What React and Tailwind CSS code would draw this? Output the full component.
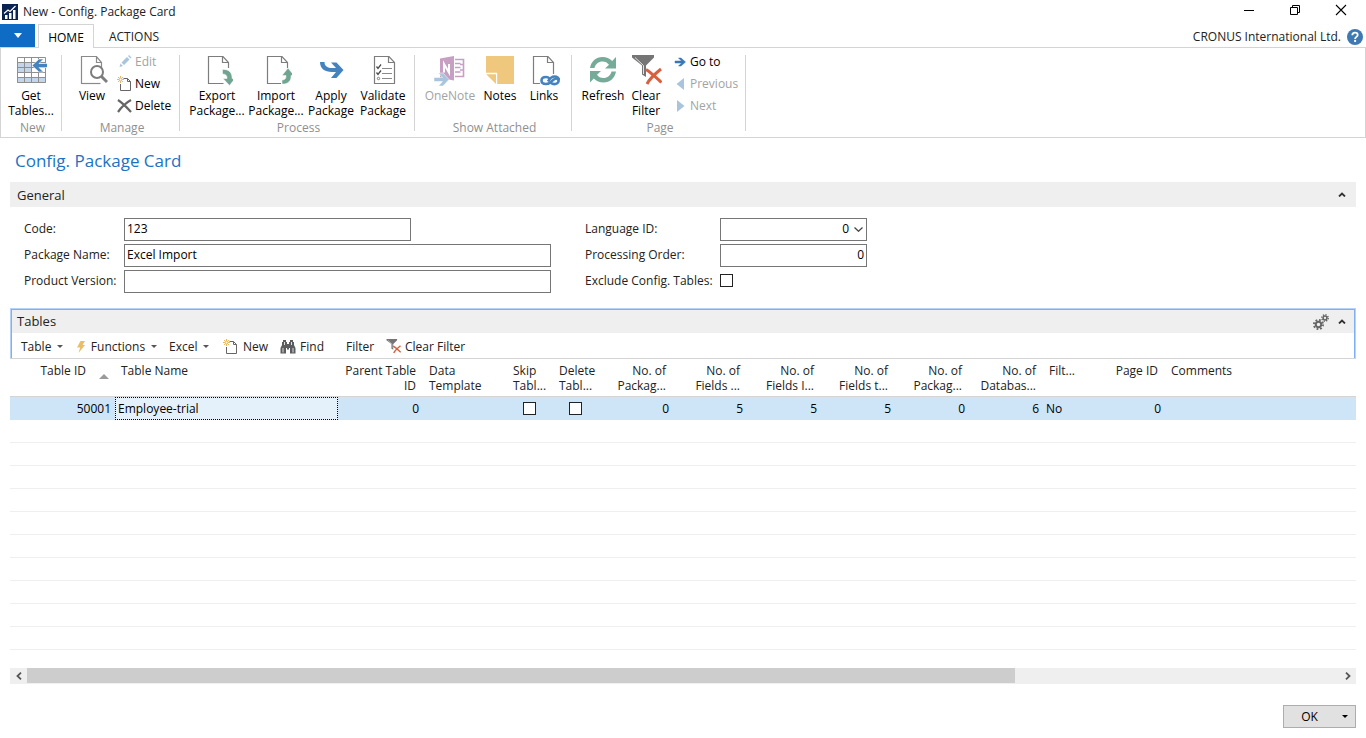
import React from "react";

const Icon = ({ children }) => (
  <svg className="h-8 w-8 shrink-0" viewBox="0 0 32 32" aria-hidden="true">
    {children}
  </svg>
);

const GetTablesIcon = () => (
  <Icon>
    <path d="M2 3h29v26H2z" fill="#fff" />
    <path d="M2 8h29v10H2zM2 23h29v6H2z" fill="#c3d5ea" />
    <path d="M16 8h15v10H16z" fill="#fff" />
    <path d="M2.500 3.500h28v25h-28zM9.500 3v26M16.500 3v26M23.500 3v26M2 8.500h29M2 13.500h29M2 18.500h29M2 23.500h29" fill="none" stroke="#8f8f8f" />
    <path d="M17 11.500 24 5h4.500l-4.500 4.500H33v4h-9l4.500 4.500H24z" fill="#4583bf" stroke="#fff" strokeWidth="0.600" />
  </Icon>
);

const ViewIcon = () => (
  <Icon>
    <path d="M13 29.500H5.500v-27h15l5 6v6M20.500 2.500v6h5" fill="none" stroke="#8a8a8a" strokeWidth="1.200" />
    <path d="M5.500 29.500h19" stroke="#8a8a8a" strokeWidth="1.200" />
    <circle cx="21" cy="18" r="6" fill="#fff" stroke="#7d7d7d" strokeWidth="2" />
    <path d="m25.500 22.500 5.500 5.500" stroke="#7d7d7d" strokeWidth="3" />
  </Icon>
);

const ExportIcon = () => (
  <Icon>
    <path d="M22.500 29.500H7.500v-27H22l5.500 6V14M21.500 2.500v6h6" fill="none" stroke="#7d7d7d" strokeWidth="1.200" />
    <path d="M21.500 15.500c6-.5 10 3 9.500 9h3L28.500 31.500 22 24.500h4c.3-3-1.500-4.500-4.500-4.500z" fill="#70a591" stroke="#fff" strokeWidth="0.500" />
  </Icon>
);

const ImportIcon = () => (
  <Icon>
    <path d="M21 29.500H7.500v-27H22l5.500 6V14M21.500 2.500v6h6" fill="none" stroke="#7d7d7d" strokeWidth="1.200" />
    <path d="M22 30c5.500.5 9.500-3 9-8.500h3L28 14l-6 7.500h4c.3 3-1 4.500-4 4.500z" fill="#70a591" stroke="#fff" strokeWidth="0.500" />
  </Icon>
);

const ApplyIcon = () => (
  <Icon>
    <path d="M5 8h4.500c0 4 3 6 8 6h3.500l-5-5.500h5.500l7 7.500-7 8H16l5-6h-4C9.500 18 5 14.500 5 8z" fill="#4583bf" />
  </Icon>
);

const ValidateIcon = () => (
  <Icon>
    <path d="M7.500 2.500H22l5.500 6v21h-20zM21.500 2.500v6h6" fill="none" stroke="#7d7d7d" strokeWidth="1.200" />
    <path d="m9.500 12.500 1.500 2 3-4M9.500 18.500l1.500 2 3-4" fill="none" stroke="#4d4d4d" strokeWidth="1.300" />
    <path d="M15 14.500h10M15 19.500h10M15 24.500h10" stroke="#8a8a8a" />
    <circle cx="11.500" cy="24.500" r="1.200" fill="none" stroke="#7d7d7d" />
  </Icon>
);

const OneNoteIcon = () => (
  <Icon>
    <path d="M21 5.500h8.500v17H21M21 9.500h5.500M21 13.500h5.500M21 18h5.500M26 10.500h4M26 16h4" fill="none" stroke="#c69fc3" strokeWidth="1.600" />
    <path d="M6 4.500 20 2v24.500L6 24z" fill="#c69fc3" />
    <path d="M10 18.500v-8.500l5 8.500v-8.500" fill="none" stroke="#fff" strokeWidth="2" />
    <path d="M0 23.500h8.500l-4-4.500H9l6 6.500-6 6.500H4.500l4-4.500H0z" fill="#a9c4dd" stroke="#fff" strokeWidth="0.500" />
  </Icon>
);

const NotesIcon = () => (
  <Icon>
    <path d="M2 2h28v28H13.200V18.800H2z" fill="#efc77d" />
    <path d="M2.200 20.200h9.800V30z" fill="#efc77d" />
  </Icon>
);

const LinksIcon = () => (
  <Icon>
    <path d="M12 29.500H5.500v-27H20l5.500 6V20M19.500 2.500v6h6" fill="none" stroke="#7d7d7d" strokeWidth="1.200" />
    <g fill="none" stroke="#4583bf" strokeWidth="2.600">
      <path d="M21.500 24.500c-1-1.200-2-1.500-3.500-1.500-3 0-4.500 1.500-4.500 3.500s1.500 3.500 4.500 3.500c3.500 0 4.500-2 6.500-3.500s3-3 5-1.500 1 4.500-2 5c-2 .3-3.500-.2-4.500-1" />
      <path d="M20 27.500c2-3.500 4-5 6.500-5s4.500 1.500 4.500 3.800" />
    </g>
  </Icon>
);

const RefreshIcon = () => (
  <Icon>
    <g fill="#76ab99">
      <path d="M3 14C4 7.500 9 3 15.500 3c4 0 7 1.300 9.700 4L29 3v11.500H18l4-3.700C20.300 8.700 18.500 7.500 15.500 7.500 11.500 7.500 8.500 10 7.500 14z" />
      <path d="M29 17.500c-1 6.500-6 11-12.500 11-4 0-7-1.300-9.700-4L3 28.500V17h11l-4 3.700c1.700 2.100 3.500 3.300 6.500 3.300 4 0 7-2.500 8-6.500z" />
    </g>
  </Icon>
);

const ClearFilterShape = () => (
  <g>
    <path d="M2 1h22v2.500l-8 8V23l-4-2.500v-9L2 3.500z" fill="#757575" />
    <path d="M5 3.500l8.500 8V20" fill="none" stroke="#fff" strokeWidth="0.800" />
    <path d="M16 15.500c5 3 10 8 15.500 13M31 15c-5 4-11 9-14 15" fill="none" stroke="#d8603f" strokeWidth="3" />
  </g>
);

const Small = ({ children }) => (
  <svg className="h-4 w-4 shrink-0" viewBox="0 0 16 16" aria-hidden="true">
    {children}
  </svg>
);

const NewDocIcon = () => (
  <Small>
    <path d="M6.500 2.500h4l3 3v9h-10V8M10.500 2.500v3h3" fill="none" stroke="#666" />
    <path d="M3.500 0v7M0 3.500h7M1 1l5 5M6 1 1 6" stroke="#e9b04c" strokeWidth="0.900" />
    <circle cx="3.500" cy="3.500" r="1" fill="#fff" />
  </Small>
);

const EditIcon = () => (
  <Small>
    <path d="m2.500 13 1-3.500 2.500 2.500zM4.500 8.500l5.500-5.500 2.500 2.500L7 11zM11 2l1-1 2.500 2.500-1 1z" fill="#a9c4dd" />
  </Small>
);

const DeleteIcon = () => (
  <Small>
    <path d="M1 2C5.500 5 9.500 9 14 14M14 2C8.500 5 4.500 9 1 14" fill="none" stroke="#666" strokeWidth="2.200" />
  </Small>
);

const GoToIcon = () => (
  <Small>
    <path d="M3 7h6.500L6.500 4H9l4.500 4L9 12H6.500l3-3H3z" fill="#3a77b5" stroke="#3a77b5" strokeWidth="0.500" />
  </Small>
);

const PreviousIcon = () => (
  <Small>
    <path d="M12 2v12L4.500 8z" fill="#a9c4dd" />
  </Small>
);

const NextIcon = () => (
  <Small>
    <path d="M5 2v12l7.500-6z" fill="#a9c4dd" />
  </Small>
);

const Caret = () => (
  <svg className="h-[3px] w-[6px] shrink-0" viewBox="0 0 6 3" aria-hidden="true">
    <path d="M0 0h6L3 3z" fill="#555" />
  </svg>
);

const ChevronUp = () => (
  <svg className="h-[5px] w-2 shrink-0" viewBox="0 0 8 5" aria-hidden="true">
    <path d="M1 4.500 4 1.500l3 3" fill="none" stroke="#333" strokeWidth="1.800" />
  </svg>
);

function BigButton({ icon, lines, width, disabled }) {
  return (
    <button
      type="button"
      disabled={disabled}
      className={`flex shrink-0 flex-col items-center gap-[2px] ${width} ${disabled ? "text-[#a3a3a3]" : "text-black"}`}
    >
      {icon}
      <span className="leading-[15px] whitespace-nowrap">
        {lines.map((line) => (
          <span key={line} className="block">{line}</span>
        ))}
      </span>
    </button>
  );
}

function SmallButton({ icon, label, disabled }) {
  return (
    <button
      type="button"
      disabled={disabled}
      className={`flex h-[22px] items-center gap-0.5 whitespace-nowrap ${disabled ? "text-[#a3a3a3]" : "text-black"}`}
    >
      {icon}
      <span>{label}</span>
    </button>
  );
}

function Group({ title, width, pad = "", children }) {
  return (
    <section className={`flex shrink-0 ${width}`} aria-label={title}>
      <div className="flex min-w-0 flex-1 flex-col justify-between pt-[6px] pb-[2px]">
        <div className={`flex items-start ${pad}`}>{children}</div>
        <div className="pl-[3px] text-center leading-[15px] text-[#8f8f8f]">{title}</div>
      </div>
      <div className="mt-[7px] h-[76px] w-px bg-[#d4d4d4]" />
    </section>
  );
}

function TextField({ id, label, value, labelWidth, inputWidth, align = "" }) {
  return (
    <div className="flex items-center">
      <label htmlFor={id} className={`shrink-0 pb-0.5 whitespace-nowrap ${labelWidth}`}>{label}</label>
      <input
        id={id}
        type="text"
        defaultValue={value}
        className={`h-[23px] w-full min-w-0 border border-[#767676] bg-white px-0.5 pb-0.5 text-black outline-none ${inputWidth} ${align}`}
      />
    </div>
  );
}

const checkbox = "block size-[13px] appearance-none border border-[#222] bg-white";

const columns = [
  { lines: ["Table ID"], width: "w-[105px]", right: true, sorted: true, value: "50001" },
  { lines: ["Table Name"], width: "w-[223px]", focused: true, value: "Employee-trial" },
  { lines: ["Parent Table", "ID"], width: "w-[85px]", right: true, value: "0" },
  { lines: ["Data", "Template"], width: "w-[84px]", value: "" },
  { lines: ["Skip", "Tabl..."], width: "w-[46px]", check: true },
  { lines: ["Delete", "Tabl..."], width: "w-[46px]", check: true },
  { lines: ["No. of", "Packag..."], width: "w-[74px]", right: true, value: "0" },
  { lines: ["No. of", "Fields ..."], width: "w-[74px]", right: true, value: "5" },
  { lines: ["No. of", "Fields I..."], width: "w-[74px]", right: true, value: "5" },
  { lines: ["No. of", "Fields t..."], width: "w-[74px]", right: true, value: "5" },
  { lines: ["No. of", "Packag..."], width: "w-[74px]", right: true, value: "0" },
  { lines: ["No. of", "Databas..."], width: "w-[74px]", right: true, value: "6" },
  { lines: ["Filt..."], width: "w-[48px]", value: "No" },
  { lines: ["Page ID"], width: "w-[74px]", right: true, value: "0" },
  { lines: ["Comments"], width: "", value: "" },
];

const emptyRows = Array.from({ length: 10 }, (_, i) => i);

function TitleBar() {
  return (
    <header className="flex h-6 items-center">
      <svg className="ml-[2px] h-4 w-4" viewBox="0 0 16 16" aria-hidden="true">
        <path d="M0 0h16v16H0z" fill="#0b2350" />
        <path d="M3 11h2.500v4H3zM7 9h2.500v6H7zM11 6h2.500v9H11z" fill="#fff" />
        <path d="M2 9.500 6 6l2 1.500L13.500 2" fill="none" stroke="#fff" strokeWidth="1.200" />
      </svg>
      <h1 className="ml-[5px]">New - Config. Package Card</h1>
      <div className="mr-0.5 ml-auto flex pb-1">
        <button type="button" aria-label="Minimize" className="flex w-[46px] justify-center">
          <svg className="h-3 w-3" viewBox="0 0 12 12"><path d="M1 6.500h10" stroke="#000" /></svg>
        </button>
        <button type="button" aria-label="Restore" className="flex w-[46px] justify-center">
          <svg className="h-3 w-3" viewBox="0 0 12 12">
            <path d="M1.500 3.500h7v7h-7zM3.500 3.500v-2h7v7h-2" fill="none" stroke="#000" />
          </svg>
        </button>
        <button type="button" aria-label="Close" className="flex w-[46px] justify-center">
          <svg className="h-3 w-3" viewBox="0 0 12 12"><path d="m1 1 10 10M11 1 1 11" stroke="#000" strokeWidth="1.100" /></svg>
        </button>
      </div>
    </header>
  );
}

function Tabs() {
  return (
    <nav className="flex h-6">
      <div className="w-[35px] border-b border-[#d4d4d4]">
        <button type="button" aria-label="Application menu" className="flex h-full w-full items-center justify-center bg-[#0f6cc5]">
          <svg className="h-[5px] w-2" viewBox="0 0 8 5"><path d="M0 0h8L4 5z" fill="#fff" /></svg>
        </button>
      </div>
      <div className="w-[3px] border-b border-[#d4d4d4]" />
      <button type="button" className="w-14 border border-b-0 border-[#d4d4d4] pt-0.5 text-black">HOME</button>
      <div className="flex flex-1 items-center border-b border-[#d4d4d4] pt-[3px]">
        <button type="button" className="w-20">ACTIONS</button>
        <span className="ml-auto">CRONUS International Ltd.</span>
        <button type="button" aria-label="Help" className="mr-[3px] ml-[6px]">
          <svg className="h-4 w-4" viewBox="0 0 16 16">
            <circle cx="8" cy="8" r="8" fill="#3f79b3" />
            <path d="M5.300 6.200C5.300 4.500 6.400 3.600 8 3.600s2.700.9 2.700 2.300c0 1.900-2.600 2-2.600 4" fill="none" stroke="#fff" strokeWidth="1.800" />
            <circle cx="8.100" cy="12" r="1.150" fill="#fff" />
          </svg>
        </button>
      </div>
    </nav>
  );
}

function Ribbon() {
  return (
    <div className="flex h-[90px] border-x border-b border-[#d4d4d4]">
      <Group title="New" width="w-[61px]">
        <BigButton icon={<GetTablesIcon />} lines={["Get", "Tables..."]} width="w-[60px]" />
      </Group>
      <Group title="Manage" width="w-[118px]" pad="pl-2.5">
        <BigButton icon={<ViewIcon />} lines={["View"]} width="w-10" />
        <div className="-mt-[3px] ml-[5px]">
          <SmallButton icon={<EditIcon />} label="Edit" disabled />
          <SmallButton icon={<NewDocIcon />} label="New" />
          <SmallButton icon={<DeleteIcon />} label="Delete" />
        </div>
      </Group>
      <Group title="Process" width="w-[235px]" pad="pl-[7px]">
        <BigButton icon={<ExportIcon />} lines={["Export", "Package..."]} width="w-[60px]" />
        <BigButton icon={<ImportIcon />} lines={["Import", "Package..."]} width="w-[58px]" />
        <BigButton icon={<ApplyIcon />} lines={["Apply", "Package"]} width="w-[52px]" />
        <BigButton icon={<ValidateIcon />} lines={["Validate", "Package"]} width="w-[52px]" />
      </Group>
      <Group title="Show Attached" width="w-[157px]" pad="pl-[7px]">
        <BigButton icon={<OneNoteIcon />} lines={["OneNote"]} width="w-[56px]" disabled />
        <BigButton icon={<NotesIcon />} lines={["Notes"]} width="w-11" />
        <BigButton icon={<LinksIcon />} lines={["Links"]} width="w-11" />
      </Group>
      <Group title="Page" width="w-[174px]" pad="pl-2">
        <BigButton icon={<RefreshIcon />} lines={["Refresh"]} width="w-[46px]" />
        <BigButton icon={<Icon><ClearFilterShape /></Icon>} lines={["Clear", "Filter"]} width="w-10" />
        <div className="-mt-[3px] ml-[6px]">
          <SmallButton icon={<GoToIcon />} label="Go to" />
          <SmallButton icon={<PreviousIcon />} label="Previous" disabled />
          <SmallButton icon={<NextIcon />} label="Next" disabled />
        </div>
      </Group>
    </div>
  );
}

function GeneralTab() {
  return (
    <section>
      <div className="flex h-[25px] items-center justify-between bg-[#efefef] pr-2.5 pl-[7px]">
        <h3 className="text-[13px]">General</h3>
        <button type="button" aria-label="Collapse General"><ChevronUp /></button>
      </div>
      <div className="grid grid-cols-[561fr_771fr] pt-[11px] pl-3.5">
        <div className="flex flex-col gap-[3px]">
          <TextField id="code" label="Code:" value="123" labelWidth="w-[100px]" inputWidth="max-w-[287px]" />
          <TextField id="package-name" label="Package Name:" value="Excel Import" labelWidth="w-[100px]" inputWidth="max-w-[427px]" />
          <TextField id="product-version" label="Product Version:" value="" labelWidth="w-[100px]" inputWidth="max-w-[427px]" />
        </div>
        <div className="flex flex-col gap-[3px]">
          <div className="flex items-center">
            <label htmlFor="language-id" className="w-[135px] shrink-0 pb-0.5">Language ID:</label>
            <div className="grid w-full max-w-[147px] items-center">
              <select
                id="language-id"
                defaultValue="0"
                className="col-start-1 row-start-1 h-[23px] w-full appearance-none border border-[#767676] bg-white pr-[17px] pb-0.5 text-black [text-align-last:right]"
              >
                <option value="0">0</option>
              </select>
              <svg className="pointer-events-none col-start-1 row-start-1 mr-1 h-[5px] w-[9px] justify-self-end" viewBox="0 0 9 5" aria-hidden="true">
                <path d="m.5.500 4 3.800 4-3.800" fill="none" stroke="#444" strokeWidth="1.200" />
              </svg>
            </div>
          </div>
          <TextField id="processing-order" label="Processing Order:" value="0" labelWidth="w-[135px]" inputWidth="max-w-[147px]" align="text-right" />
          <div className="flex h-[21px] items-center">
            <label htmlFor="exclude" className="w-[135px] shrink-0">Exclude Config. Tables:</label>
            <input id="exclude" type="checkbox" className={checkbox} />
          </div>
        </div>
      </div>
    </section>
  );
}

function Toolbar() {
  return (
    <div className="flex h-[25px] items-center pt-0.5 pl-[9px] whitespace-nowrap">
      <button type="button" className="flex w-[42px] items-center justify-between">Table<Caret /></button>
      <button type="button" className="ml-3.5 flex w-20 items-center justify-between">
        <svg className="h-3 w-2 shrink-0" viewBox="0 0 8 12" aria-hidden="true"><path d="M3.500 0H8L5.500 4H8L1.500 12l1.700-5.500H0z" fill="#ebbd66" /></svg>
        Functions
        <Caret />
      </button>
      <button type="button" className="ml-3 flex w-10 items-center justify-between">Excel<Caret /></button>
      <button type="button" className="ml-3.5 flex w-[45px] items-center justify-between"><NewDocIcon />New</button>
      <button type="button" className="ml-3 flex w-11 items-center justify-between">
        <Small>
          <path d="M3 1h3v2h1v2h2V3h1V1h3v2h1v3l1.500 3v5.500H10V9H9v1.500H7V9H6v5.500H.500V9L2 6V3h1z" fill="#5c5c5c" />
          <path d="M3 9v4.500M13 9v4.500M4.500 3v3M11.500 3v3" stroke="#fff" strokeWidth="0.800" />
        </Small>
        Find
      </button>
      <button type="button" className="ml-[22px] w-[26px]">Filter</button>
      <button type="button" className="ml-3.5 flex items-center gap-1">
        <svg className="size-[15px] shrink-0" viewBox="1 1 31 31" aria-hidden="true"><ClearFilterShape /></svg>
        Clear Filter
      </button>
    </div>
  );
}

function TablesTab() {
  return (
    <section className="mt-[15px]">
      <div className="border border-b-0 border-[#b5d2f8]">
        <div className="border border-b-0 border-[#7fb0f5]">
          <div className="flex h-[23px] items-center bg-[#efefef] pr-2 pl-[5px]">
            <h3 className="pb-0.5 text-[13px]">Tables</h3>
            <button type="button" aria-label="Customize" className="mr-px ml-auto">
              <svg className="h-4 w-4" viewBox="0 0 16 16" aria-hidden="true">
                <g fill="none" stroke="#666">
                  <circle cx="5.500" cy="10.500" r="2.700" strokeWidth="1.900" />
                  <circle cx="5.500" cy="10.500" r="4.600" strokeWidth="1.900" strokeDasharray="1.800 1.810" />
                  <circle cx="12" cy="4" r="1.900" strokeWidth="1.500" />
                  <circle cx="12" cy="4" r="3.200" strokeWidth="1.500" strokeDasharray="1.250 1.260" />
                </g>
              </svg>
            </button>
            <button type="button" aria-label="Collapse Tables" className="ml-2"><ChevronUp /></button>
          </div>
          <Toolbar />
        </div>
      </div>
      <table className="w-full table-fixed border-separate border-spacing-0 border-t border-[#d4d4d4]">
        <thead>
          <tr className="h-[38px]">
            {columns.map((col, i) => (
              <th
                key={i}
                scope="col"
                className={`border-b border-[#d4d4d4] pt-1 align-top leading-[15px] font-normal whitespace-nowrap ${col.width} ${col.right ? "text-right" : "pl-1.5 text-left"} ${col.sorted ? "pr-1.5" : col.right ? "pr-[7px]" : ""}`}
              >
                {col.sorted ? (
                  <span className="flex h-[15px] items-start justify-end gap-[13px]">
                    {col.lines[0]}
                    <svg className="mt-[11px] h-[5px] w-[10px]" viewBox="0 0 10 5" aria-label="Sorted ascending"><path d="M0 5h10L5 0z" fill="#9a9a9a" /></svg>
                  </span>
                ) : (
                  col.lines.map((line) => <span key={line} className="block">{line}</span>)
                )}
              </th>
            ))}
          </tr>
        </thead>
        <tbody>
          <tr className="h-[23px] bg-[#cde5f7] text-black">
            {columns.map((col, i) => (
              <td
                key={i}
                className={`p-0 leading-[15px] ${col.focused ? "border border-dotted border-black bg-[#e4f1fa] pl-0.5" : col.right ? "pr-1 text-right" : "pl-[3px]"}`}
              >
                {col.check ? <input type="checkbox" aria-label={col.lines.join(" ")} className={`ml-[13px] ${checkbox}`} /> : col.value}
              </td>
            ))}
          </tr>
          {emptyRows.map((row) => (
            <tr key={row} className="h-[23px]">
              <td colSpan={columns.length} className="border-b border-[#efefef] p-0" />
            </tr>
          ))}
        </tbody>
      </table>
    </section>
  );
}

function ScrollBar() {
  return (
    <div className="mt-[18px] flex h-4 bg-[#efefef]">
      <button type="button" aria-label="Scroll left" className="flex w-[17px] items-center justify-center">
        <svg className="h-2 w-[6px]" viewBox="0 0 6 8"><path d="M5 .700 1.500 4 5 7.300" fill="none" stroke="#555" strokeWidth="1.800" /></svg>
      </button>
      <div className="h-[15px] flex-[988] bg-[#cdcdcd]" />
      <div className="flex-[324]" />
      <button type="button" aria-label="Scroll right" className="flex w-[17px] items-center justify-center">
        <svg className="h-2 w-[6px]" viewBox="0 0 6 8"><path d="M1 .700 4.500 4 1 7.300" fill="none" stroke="#555" strokeWidth="1.800" /></svg>
      </button>
    </div>
  );
}

export default function App() {
  return (
    <div className="min-h-screen bg-white font-['Open_Sans','Noto_Sans',sans-serif] text-[12px] leading-4 text-[#222]">
      <TitleBar />
      <Tabs />
      <Ribbon />
      <main className="px-2.5">
        <h2 className="flex h-11 items-center pt-0.5 pl-[5px] text-[17px] leading-6 text-[#1a73c7]">Config. Package Card</h2>
        <GeneralTab />
        <TablesTab />
        <ScrollBar />
        <div className="mt-[21px] flex justify-end">
          <div className="flex h-[23px] w-[73px] border border-[#adadad] bg-[#e1e1e1] text-black">
            <button type="button" className="flex-1">OK</button>
            <button type="button" aria-label="More options" className="flex w-5 items-center justify-center">
              <svg className="h-[3px] w-[6px]" viewBox="0 0 6 3"><path d="M0 0h6L3 3z" fill="#000" /></svg>
            </button>
          </div>
        </div>
      </main>
    </div>
  );
}
